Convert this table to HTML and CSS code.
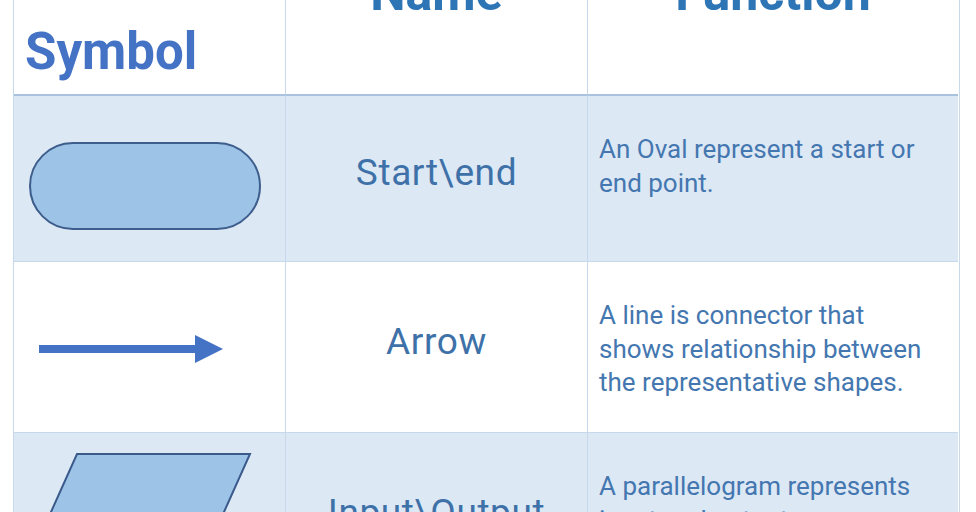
FILE: index.html
```html
<!DOCTYPE html>
<html>
<head>
<meta charset="utf-8">
<link rel="stylesheet" href="styles.css">
</head>
<body>
<div class="table">
  <div class="cell head head-symbol"><span>Symbol</span></div>
  <div class="cell head head-top"><span>Name</span></div>
  <div class="cell head head-top"><span>Function</span></div>

  <div class="cell sym sym-oval alt"><div class="oval"></div></div>
  <div class="cell name alt">Start\end</div>
  <div class="cell func alt">An Oval represent a start or end point.</div>

  <div class="cell sym sym-arrow">
    <svg width="190" height="30" viewBox="0 0 190 30">
      <rect x="0" y="10" width="158" height="8" fill="#4472c4"/>
      <polygon points="156,0 184,14 156,28" fill="#4472c4"/>
    </svg>
  </div>
  <div class="cell name">Arrow</div>
  <div class="cell func">A line is connector that shows relationship between the representative shapes.</div>

  <div class="cell sym sym-para alt">
    <svg width="240" height="110" viewBox="0 0 240 110">
      <polygon points="53,1 226,1 178,108 5,108" fill="#9dc3e6" stroke="#3a5a8c" stroke-width="2"/>
    </svg>
  </div>
  <div class="cell name alt">Input\Output</div>
  <div class="cell func alt">A parallelogram represents input and output.</div>
</div>
</body>
</html>
```

FILE: styles.css
```css
html, body {
  margin: 0;
  padding: 0;
  background: #ffffff;
  overflow: hidden;
}

body {
  font-family: Roboto, "Liberation Sans", sans-serif;
}

.table {
  display: grid;
  grid-template-columns: 272px 302px 370px;
  grid-template-rows: 137px 166px 171px 171px;
  margin-left: 13px;
  margin-top: -41px;
  width: 945px;
  border-left: 1px solid #c8d8eb;
  border-right: 1px solid #c8d8eb;
}

.cell {
  border-right: 1px solid #c8d8eb;
  border-bottom: 1px solid #c8d8eb;
  background: #ffffff;
  overflow: hidden;
}

.cell:nth-child(3n) {
  border-right: none;
}

.alt {
  background: #dde8f5;
}

.head {
  border-bottom: 2px solid #a9c2e0;
  font-weight: 700;
  font-size: 50px;
  line-height: 50px;
  display: flex;
  justify-content: center;
}

.head-symbol {
  justify-content: flex-start;
  padding-left: 11px;
  padding-top: 68px;
  color: #4472c4;
  font-size: 51px;
}

.head-top {
  color: #2e75b6;
  padding-top: 9px;
}

.sym {
  display: flex;
  align-items: flex-start;
}

.sym-oval {
  padding-left: 15px;
  padding-top: 46px;
}

.oval {
  width: 228px;
  height: 84px;
  border: 2px solid #3d5d8c;
  border-radius: 44px;
  background: #9dc3e6;
}

.sym-arrow {
  padding-left: 25px;
  padding-top: 73px;
}

.sym-para {
  padding-left: 10px;
  padding-top: 20px;
}

.name {
  display: flex;
  align-items: center;
  justify-content: center;
  padding-bottom: 12px;
  font-size: 37px;
  color: #3e71a8;
  letter-spacing: 0.6px;
}

.func {
  padding: 37px 24px 0 11px;
  font-size: 26px;
  line-height: 33.5px;
  color: #4477b0;
}
```
